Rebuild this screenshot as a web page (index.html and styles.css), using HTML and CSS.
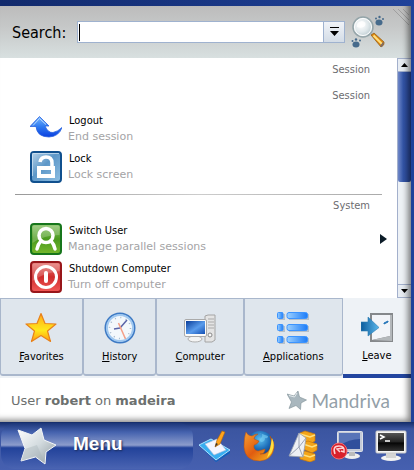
FILE: index.html
```html
<!DOCTYPE html>
<html lang="en">
  <head>
    <meta charset="UTF-8" />
    <meta name="viewport" content="width=device-width, initial-scale=1.0" />
    <title>Menu</title>
    <link rel="stylesheet" href="styles.css">
  </head>

  <body>
    <svg class="defs" width="0" height="0" aria-hidden="true">
      <defs>
        <linearGradient id="blue" x1="0" y1="0" x2="0" y2="1">
          <stop offset="0" stop-color="#7ab8ff" />
          <stop offset=".5" stop-color="#2e7af0" />
          <stop offset="1" stop-color="#0a3fe0" />
        </linearGradient>
        <linearGradient id="lock" x1="0" y1="0" x2="1" y2="1">
          <stop offset="0" stop-color="#bcd6ea" />
          <stop offset=".45" stop-color="#5d97c8" />
          <stop offset="1" stop-color="#8fc0e4" />
        </linearGradient>
        <linearGradient id="green" x1="0" y1="0" x2="0" y2="1">
          <stop offset="0" stop-color="#8cc46a" />
          <stop offset=".5" stop-color="#4a9a1e" />
          <stop offset="1" stop-color="#76b82c" />
        </linearGradient>
        <linearGradient id="red" x1="0" y1="0" x2="0" y2="1">
          <stop offset="0" stop-color="#e67c78" />
          <stop offset=".5" stop-color="#cf2c2c" />
          <stop offset="1" stop-color="#f25a58" />
        </linearGradient>
        <linearGradient id="gold" x1="0" y1="0" x2="0" y2="1">
          <stop offset="0" stop-color="#ffa818" />
          <stop offset=".6" stop-color="#ffe81c" />
          <stop offset="1" stop-color="#ff9a10" />
        </linearGradient>
        <linearGradient id="silver" x1="0" y1="0" x2="1" y2="1">
          <stop offset="0" stop-color="#ffffff" />
          <stop offset=".5" stop-color="#d3dbdf" />
          <stop offset="1" stop-color="#8d989e" />
        </linearGradient>
        <linearGradient id="screen" x1="0" y1="0" x2="1" y2="1">
          <stop offset="0" stop-color="#0a3d9a" />
          <stop offset=".55" stop-color="#5a9cec" />
          <stop offset="1" stop-color="#1450b4" />
        </linearGradient>
        <linearGradient id="pill" x1="0" y1="0" x2="1" y2="0">
          <stop offset="0" stop-color="#9cd0ff" />
          <stop offset="1" stop-color="#1c7cf8" />
        </linearGradient>
        <linearGradient id="arrow" x1="0" y1="0" x2="1" y2="0">
          <stop offset="0" stop-color="#0c5c9c" />
          <stop offset="1" stop-color="#5cb8ec" />
        </linearGradient>
        <radialGradient id="glass" cx=".4" cy=".4" r=".6">
          <stop offset="0" stop-color="#ffffff" />
          <stop offset=".6" stop-color="#dfe7ea" />
          <stop offset="1" stop-color="#bccbd0" />
        </radialGradient>
        <radialGradient id="globe" cx=".5" cy=".3" r=".7">
          <stop offset="0" stop-color="#5cc0f0" />
          <stop offset=".5" stop-color="#1c6cb8" />
          <stop offset="1" stop-color="#0a2468" />
        </radialGradient>
        <linearGradient id="fox" x1="0" y1="0" x2="1" y2="1">
          <stop offset="0" stop-color="#f8a030" />
          <stop offset=".5" stop-color="#e05c10" />
          <stop offset="1" stop-color="#f8c020" />
        </linearGradient>
        <linearGradient id="dark" x1="0" y1="0" x2="0" y2="1">
          <stop offset="0" stop-color="#555" />
          <stop offset=".5" stop-color="#222" />
          <stop offset=".55" stop-color="#050505" />
          <stop offset="1" stop-color="#333" />
        </linearGradient>
      </defs>
    </svg>

    <main class="menu">
      <svg class="grip" width="18" height="18" viewBox="0 0 18 18">
        <path d="M1 1l16 16M6 1l11 11M11 1l6 6" stroke="#a0a0a0" fill="none" />
      </svg>
      <form class="search">
        <label for="search">Search:</label>
        <div class="combo">
          <input type="text" id="search" autocomplete="off">
          <button type="button" aria-label="Search history">
            <svg width="11" height="10" viewBox="0 0 11 10"><path d="M1 0h9v1H1zM1 4h9L5.500 9z" fill="#000" /></svg>
          </button>
        </div>
        <svg class="magnifier" width="34" height="34" viewBox="0 0 34 34">
          <path d="M20 20l3-2 10 9q1 3-3 5z" fill="#e08a10" stroke="#8a5410" stroke-width=".7" />
          <path d="M22.500 20.500l8.500 8.500" stroke="#ffe080" stroke-width="2" />
          <path d="M29 31l3-4 1 1-2 4z" fill="#7d6c68" />
          <circle cx="12" cy="12" r="10" fill="url(#glass)" stroke="#95a5a9" stroke-width="1.500" />
          <circle cx="12" cy="12" r="8.500" fill="none" stroke="#fff" />
          <path d="M6 12q-1-5 5-6 5 1 3 5-3 3-8 1z" fill="#fff" opacity=".8" />
          <g fill="#466a8b">
            <ellipse cx="28" cy="7.500" rx="3.500" ry="3" /><circle cx="25" cy="3.500" r="1" /><circle cx="28.500" cy="2" r="1.200" /><circle cx="32" cy="4" r="1" />
            <ellipse cx="5" cy="29.500" rx="3.500" ry="3" /><circle cx="1.500" cy="26" r="1" /><circle cx="5" cy="24.500" r="1.200" /><circle cx="9" cy="25.500" r="1" />
          </g>
        </svg>
      </form>

      <div class="view">
        <div class="list">
          <h2>Session</h2>
          <h2>Session</h2>
          <a class="item" href="#logout">
            <svg width="32" height="32" viewBox="0 0 32 32">
              <path d="M0 13.500L9.500 3.500l9.500 9.500h-4q3 7 8 6.500 5-1 9-5-3 9-13 9.500Q7 24 6 13.500z" fill="url(#blue)" stroke="#2a62e0" stroke-width=".8" />
              <path d="M3 12.500L9.500 5.500l6.500 6" fill="none" stroke="#b8dcff" />
            </svg>
            <span class="text"><span class="name">Logout</span><span class="hint">End session</span></span>
          </a>
          <a class="item" href="#lock">
            <svg width="32" height="32" viewBox="0 0 32 32">
              <rect x="1" y="1" width="30" height="30" rx="3" fill="url(#lock)" stroke="#10508e" stroke-width="2" />
              <path d="M2.500 25V2.500H29" fill="none" stroke="#d4e6f3" opacity=".7" />
              <path d="M10 11q1-5 6-5 6 0 6 6v3" fill="none" stroke="#fff" stroke-width="3.500" />
              <path fill-rule="evenodd" d="M7 15h18v12H7zM11 19v4h10v-4z" fill="#fff" />
            </svg>
            <span class="text"><span class="name">Lock</span><span class="hint">Lock screen</span></span>
          </a>
          <hr>
          <h2>System</h2>
          <a class="item" href="#switch">
            <svg width="32" height="32" viewBox="0 0 32 32">
              <rect x="1" y="1" width="30" height="30" rx="3" fill="url(#green)" stroke="#17761c" stroke-width="2" />
              <path d="M2.500 2.500h27V12Q14 12 2.500 20z" fill="#fff" opacity=".22" />
              <circle cx="16" cy="12.500" r="7" fill="none" stroke="#fff" stroke-width="3.500" />
              <path d="M11 18q-3 3-4 8M21 18q3 3 4 8" fill="none" stroke="#fff" stroke-width="3.500" stroke-linecap="round" />
            </svg>
            <span class="text"><span class="name">Switch User</span><span class="hint">Manage parallel sessions</span></span>
            <svg class="more" width="7" height="10" viewBox="0 0 7 10"><path d="M0 0l7 5-7 5z" fill="#0c1c28" /></svg>
          </a>
          <a class="item" href="#shutdown">
            <svg width="32" height="32" viewBox="0 0 32 32">
              <rect x="1" y="1" width="30" height="30" rx="3" fill="url(#red)" stroke="#98161a" stroke-width="2" />
              <path d="M2.500 2.500h27V10Q14 12 2.500 20z" fill="#fff" opacity=".2" />
              <circle cx="16" cy="16" r="10.500" fill="none" stroke="#fff" stroke-width="3" />
              <path d="M16 12v8" stroke="#fff" stroke-width="4" stroke-linecap="round" />
            </svg>
            <span class="text"><span class="name">Shutdown Computer</span><span class="hint">Turn off computer</span></span>
          </a>
        </div>
        <div class="scrollbar">
          <button type="button" aria-label="Scroll up"><svg width="7" height="4" viewBox="0 0 7 4"><path d="M0 4h7L3.500 0z" /></svg></button>
          <div class="track"><div class="thumb"></div></div>
          <button type="button" aria-label="Scroll down"><svg width="7" height="4" viewBox="0 0 7 4"><path d="M0 0h7L3.500 4z" /></svg></button>
        </div>
      </div>

      <nav class="tabs">
        <button type="button">
          <svg width="32" height="32" viewBox="0 0 32 32">
            <path d="M16 1.500l4 10 11 .5-8.500 7 3 10.500L16 23.500l-9.500 6 3-10.500L1 12l11-.5z" fill="url(#gold)" stroke="#e8821c" stroke-width="1.200" stroke-linejoin="round" />
          </svg>
          <span><u>F</u>avorites</span>
        </button>
        <button type="button">
          <svg width="32" height="32" viewBox="0 0 32 32">
            <circle cx="16" cy="16" r="14.500" fill="#f3f8fc" stroke="#3e7ac4" stroke-width="2" />
            <circle cx="16" cy="16" r="13" fill="none" stroke="#a0c8f0" stroke-width="2" />
            <circle cx="16" cy="16" r="10.500" fill="none" stroke="#a4b8cc" stroke-width="1.500" stroke-dasharray="1 4.500" />
            <path d="M16 16l7-8M16 16l-6 1" stroke="#5a64a8" stroke-width="1.500" />
            <path d="M14.500 11l7 16" stroke="#f5a088" stroke-width="1.500" />
          </svg>
          <span><u>H</u>istory</span>
        </button>
        <button type="button">
          <svg width="32" height="32" viewBox="0 0 32 32">
            <path d="M21 4l3-1h7v25l-3 2h-7z" fill="#e4e4e4" stroke="#a4a4a4" />
            <path d="M24 7h6M24 10h6M24 13h6M24 16h6" stroke="#aaa" />
            <circle cx="26" cy="23" r="2" fill="#f8f8f8" stroke="#888" />
            <ellipse cx="11" cy="27" rx="7" ry="3" fill="#f4f4f4" stroke="#b0b0b0" />
            <rect x=".5" y="7.500" width="22" height="17" rx="1.500" fill="#fafafa" stroke="#aaa" />
            <rect x="2" y="9" width="19" height="13" fill="url(#screen)" />
          </svg>
          <span><u>C</u>omputer</span>
        </button>
        <button type="button">
          <svg width="32" height="32" viewBox="0 0 32 32">
            <g fill="#b6c0ca"><rect x="2" y="2" width="6" height="6" /><rect x="12" y="2" width="20" height="6" /><rect x="2" y="14" width="6" height="6" /><rect x="12" y="14" width="20" height="6" /><rect x="2" y="26" width="6" height="6" /><rect x="12" y="26" width="20" height="6" /></g>
            <g fill="url(#pill)" stroke="#3c94ff">
              <rect x=".5" y=".5" width="5.500" height="6" rx="1" /><rect x="10" y=".5" width="20.500" height="6" rx="2" />
              <rect x=".5" y="12.500" width="5.500" height="6" rx="1" /><rect x="10" y="12.500" width="20.500" height="6" rx="2" />
              <rect x=".5" y="24.500" width="5.500" height="6" rx="1" /><rect x="10" y="24.500" width="20.500" height="6" rx="2" />
            </g>
          </svg>
          <span><u>A</u>pplications</span>
        </button>
        <button type="button" class="active">
          <svg width="32" height="32" viewBox="0 0 32 32">
            <rect x="9" y="2" width="23" height="29" fill="#85888b" />
            <path d="M11 4h18v21l-18 4z" fill="#f2f4f8" />
            <path d="M11 29l18-4V4h2v26z" fill="#b4b8bb" />
            <path d="M23 12l4-2v1l-4 2z" fill="#2474b8" stroke="#2474b8" />
            <path d="M0 11h7V6l11 10.500L7 25v-5H0z" fill="url(#arrow)" stroke="#2c7cb4" stroke-width=".6" />
          </svg>
          <span><u>L</u>eave</span>
        </button>
      </nav>

      <footer class="status">
        <p>User <b>robert</b> on <b>madeira</b></p>
        <div class="brand">
          <svg width="20" height="20" viewBox="0 0 20 20">
            <path d="M11 1l1.500 6 7 3-5.500 3-.5 6.500-4.500-4-7 3L4.500 12 0 4l7 2z" fill="#a9b7be" stroke="#7e8e96" stroke-width=".6" />
            <path d="M10 3L7.500 7 2 5.500" fill="none" stroke="#e4eaed" />
          </svg>
          <span>Mandriva</span>
        </div>
      </footer>
    </main>

    <div class="taskbar">
      <button type="button" class="start">
        <svg width="40" height="38" viewBox="0 0 40 38">
          <path d="M24 1l3 12 12 5-10 7-1 12-9.500-7L4 34l4-12.500L1 3l14 5z" fill="url(#silver)" stroke="#f4f6f8" stroke-linejoin="round" />
          <path d="M8 22l12-4 8 18-9.500-7L4 34z" fill="#a8b4ba" opacity=".4" />
        </svg>
        <span>Menu</span>
      </button>
      <div class="launchers">
        <button type="button" aria-label="Desktop">
          <svg width="32" height="32" viewBox="0 0 32 32">
            <path d="M0 15l12-6 19 11-14 10z" fill="#38aef0" stroke="#a8e4ff" />
            <path d="M0 16l17 15 14-10v2L17 32z" fill="#0a62c0" />
            <path d="M6 14l12-5 9 11-12 5z" fill="#f4f6ff" stroke="#b0bcd8" stroke-width=".6" />
            <path d="M16 17l2-7 5-9 3 1-5 12z" fill="#ffa41c" stroke="#b06408" stroke-width=".6" />
            <path d="M16 17l1-4 2 1z" fill="#333" />
          </svg>
        </button>
        <button type="button" aria-label="Web browser">
          <svg width="32" height="32" viewBox="0 0 32 32">
            <circle cx="17" cy="15" r="14" fill="url(#globe)" />
            <path d="M16 3q4 0 3 4-4 3-1 5 4 0 4-4 3 1 3-2" fill="#7cd0f4" opacity=".6" />
            <path d="M3 2q2 4 6 4 3-2 6-2-4 2-4 5l5 2q-1 3-5 4-1 5 4 6 4-1 7-2 0 5-5 5 9 1 11-9 1-5-1-9 5 6 4 12-2 12-14 13Q2 31 1 17 1 7 3 2z" fill="url(#fox)" stroke="#b85010" stroke-width=".5" />
            <path d="M29 8q5 11-5 20 4-10 5-20z" fill="#ffe040" />
          </svg>
        </button>
        <button type="button" aria-label="Mail">
          <svg width="32" height="32" viewBox="0 0 32 32">
            <g fill="#f4a418" stroke="#c87808" stroke-width=".7">
              <path d="M13 3l5-2 10 3v7l-5 3-10-4z" />
              <path d="M16 13l5-2 9 3v6l-5 3-9-4z" />
              <path d="M13 23l5-2 10 3v6l-5 2-10-3z" />
            </g>
            <path d="M13 4l10 3 5-2M16 14l9 3 5-2M13 24l10 3 5-2" fill="none" stroke="#ffe07c" stroke-width="1.500" />
            <path d="M12 3l7 5-3 19-14-1z" fill="#eef0f4" stroke="#98a0ac" stroke-width=".8" />
            <path d="M12 3v14l7-9M2 26l10-9 4 10" fill="none" stroke="#9ca4b4" />
          </svg>
        </button>
        <button type="button" aria-label="Updates">
          <svg width="32" height="32" viewBox="0 0 32 32">
            <ellipse cx="21" cy="26" rx="8" ry="3" fill="#eee" />
            <path d="M18 20h6v6h-6z" fill="#bbb" />
            <rect x="6.500" y="1.500" width="25" height="20" rx="1" fill="#c4cad8" stroke="#dce0e8" />
            <rect x="8" y="3" width="21" height="16" fill="#2f4f9c" />
            <path d="M8 3h21v6Q18 9 8 16z" fill="#5874b8" />
            <circle cx="8" cy="21" r="8" fill="#d8202c" stroke="#f06c70" />
            <path d="M4 24q-3-8 4-8 6 0 5 6l-3-1M12 18l-6 1 3 3" fill="none" stroke="#ffd4d4" stroke-width="1.500" />
          </svg>
        </button>
        <button type="button" aria-label="Terminal">
          <svg width="32" height="32" viewBox="0 0 32 32">
            <ellipse cx="16" cy="28" rx="10" ry="3" fill="#f2f2f2" />
            <path d="M11 22h10v6H11z" fill="#d4d4d4" />
            <rect x="1" y="1" width="30" height="22" rx="1" fill="#f4f4f4" stroke="#c8c8c8" />
            <rect x="3" y="3" width="26" height="18" fill="url(#dark)" />
            <path d="M5 5l4 2-4 2M10 11h5" fill="none" stroke="#fff" stroke-width="1.500" />
          </svg>
        </button>
      </div>
    </div>
  </body>
</html>
```
FILE: styles.css
```css
body {
  margin: 0;
  padding-top: 6px;
  font-family: "DejaVu Sans Condensed", "DejaVu Sans", sans-serif;
  font-size: 11px;
  color: #000;
  background: linear-gradient(to right, #122a6c, #1f429a) #1f3f94;
}

button {
  margin: 0;
  padding: 0;
  border: none;
  background: none;
  font: inherit;
  color: inherit;
  cursor: pointer;
}

svg {
  display: block;
  flex: none;
}

.defs {
  position: absolute;
}

.menu {
  position: relative;
  margin-right: 3px;
  background: #fff;
}

/* soft shade along the right and bottom edges */
.menu::after {
  content: "";
  position: absolute;
  inset: 0;
  box-shadow: inset -5px -4px 6px -2px rgba(0, 0, 0, 0.5);
  pointer-events: none;
}

.grip {
  position: absolute;
  top: 2px;
  right: 1px;
}

.search {
  display: flex;
  align-items: center;
  gap: 6px;
  height: 52px;
  padding: 0 26px 0 12px;
  font-size: 16px;
  background: linear-gradient(#bcbcbc, #c6c8c8 40%, #d8e0e0);
}

.search label {
  padding-right: 5px;
}

.combo {
  display: flex;
  flex: 1;
  height: 20px;
  border: 1px solid #9fb2cf;
  background: #fff;
}

/* the thin line is the text cursor */
.combo input {
  flex: 1;
  min-width: 0;
  padding: 0 4px;
  border: none;
  outline: none;
  font-size: 14px;
  background: linear-gradient(#000, #000) 1px 2px / 1px 17px no-repeat;
}

.combo button {
  display: flex;
  align-items: center;
  justify-content: center;
  width: 21px;
  border-left: 1px solid #9fb2cf;
  background: linear-gradient(#f0f3f8, #d3dce6);
}

.view {
  display: flex;
}

.list {
  flex: 1;
  padding-bottom: 2px;
}

.list h2 {
  margin: 0 27px 2px;
  font-size: 11px;
  font-weight: normal;
  line-height: 24px;
  text-align: right;
  color: #6c6c70;
}

.list hr {
  height: 1px;
  margin: 8px 15px -1px;
  border: none;
  background: linear-gradient(to right, #999, #ccc 50%, #aaa);
}

.item {
  display: flex;
  align-items: center;
  gap: 6px;
  height: 38px;
  padding: 0 10px 0 30px;
  color: #000;
  text-decoration: none;
}

.item .text {
  flex: 1;
  line-height: 16px;
}

.item .name,
.item .hint {
  display: block;
}

.item .name {
  padding-left: 1px;
}

.item .hint {
  font-family: "DejaVu Sans", sans-serif;
  color: #a4a4a6;
}

.scrollbar {
  display: flex;
  flex-direction: column;
  width: 14px;
  box-sizing: border-box;
  border-left: 1px solid #a3b0cc;
  background: #eef2f6;
}

.scrollbar button {
  display: flex;
  align-items: center;
  justify-content: center;
  height: 14px;
  border: solid #a3b0cc;
  border-width: 1px 0;
  background: #e8edf3;
}

.track {
  flex: 1;
}

.thumb {
  height: 52%;
  border-radius: 0 0 2px 2px;
  background: linear-gradient(to right, #7088c8, #3355a8 40%, #2a489a);
}

.tabs {
  display: flex;
  background: #eef2f6;
}

.tabs button {
  display: flex;
  flex: 1 1 auto;
  flex-direction: column;
  align-items: center;
  gap: 4px;
  height: 78px;
  padding: 13px 16px 0;
  border: 1px solid #a9b7cc;
  border-bottom-width: 2px;
  border-radius: 0 0 3px 3px;
  line-height: 18px;
  background: #dfe6ed;
}

.tabs .active {
  height: 80px;
  border: none;
  border-bottom: 4px solid #2346a0;
  border-radius: 0;
  background: #eef2f6;
}

.status {
  display: flex;
  align-items: center;
  justify-content: space-between;
  height: 44px;
  padding: 0 21px 0 11px;
  font-family: "DejaVu Sans", sans-serif;
  font-size: 13px;
  color: #6c706e;
}

.status p {
  margin: 0;
}

.brand {
  display: flex;
  align-items: center;
  gap: 4px;
  font-family: Lato, sans-serif;
  font-size: 19px;
  color: #93a0a8;
}

.taskbar {
  display: flex;
  align-items: center;
  justify-content: space-between;
  height: 48px;
  padding: 0 7px 0 1px;
  background: linear-gradient(#142c68, #3b55a0 7px, #4660b0);
}

.start {
  display: flex;
  align-items: center;
  gap: 16px;
  width: 192px;
  height: 46px;
  padding-left: 16px;
  border-radius: 14px;
  font-family: "Liberation Sans", Arial, sans-serif;
  font-size: 19px;
  font-weight: bold;
  color: #fff;
  text-shadow: 1px 1px 2px #1c2c58;
  background: linear-gradient(#1c3678, #4562ae 20%, #8c9ccc 48%, #22429a 54%, #4a64b2);
}

.start span {
  padding-bottom: 5px;
}

.launchers {
  display: flex;
  gap: 12px;
}
```
